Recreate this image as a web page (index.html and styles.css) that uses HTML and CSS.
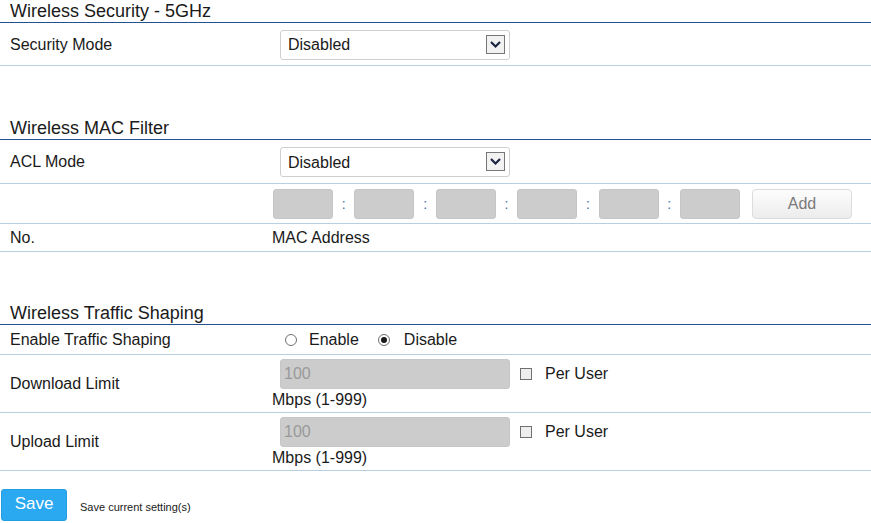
FILE: index.html
```html
<!DOCTYPE html>
<html lang="en">
<head>
    <meta charset="UTF-8">
    <meta name="viewport" content="width=device-width, initial-scale=1.0">
    <title>Wireless Settings</title>
    <link rel="stylesheet" href="styles.css">
</head>
<body>
    <div class="section">
        <div class="section-title">Wireless Security - 5GHz</div>
        <div class="row row-select">
            <div class="label">Security Mode</div>
            <div class="field">
                <div class="select-wrap">
                    <select class="select"><option>Disabled</option></select>
                    <svg class="select-arrow" width="19" height="19" viewBox="0 0 19 19"><rect x="0.5" y="0.5" width="18" height="18" fill="#f2f2f2" stroke="#777"/><polyline points="5,7 9.5,11.5 14,7" fill="none" stroke="#1b2440" stroke-width="2.2"/></svg>
                </div>
            </div>
        </div>
    </div>

    <div class="section section-mac">
        <div class="section-title">Wireless MAC Filter</div>
        <div class="row row-select row-acl">
            <div class="label">ACL Mode</div>
            <div class="field">
                <div class="select-wrap">
                    <select class="select"><option>Disabled</option></select>
                    <svg class="select-arrow" width="19" height="19" viewBox="0 0 19 19"><rect x="0.5" y="0.5" width="18" height="18" fill="#f2f2f2" stroke="#777"/><polyline points="5,7 9.5,11.5 14,7" fill="none" stroke="#1b2440" stroke-width="2.2"/></svg>
                </div>
            </div>
        </div>
        <div class="row row-mac">
            <div class="label"></div>
            <div class="field mac-field">
                <input class="mac" type="text"><span class="sep">:</span>
                <input class="mac" type="text"><span class="sep">:</span>
                <input class="mac" type="text"><span class="sep">:</span>
                <input class="mac" type="text"><span class="sep">:</span>
                <input class="mac" type="text"><span class="sep">:</span>
                <input class="mac" type="text">
                <button class="btn-add">Add</button>
            </div>
        </div>
        <div class="row row-head">
            <div class="label">No.</div>
            <div class="field">MAC Address</div>
        </div>
    </div>

    <div class="section section-last">
        <div class="section-title">Wireless Traffic Shaping</div>
        <div class="row row-radio">
            <div class="label">Enable Traffic Shaping</div>
            <div class="field radio-field">
                <span class="radio"></span><span class="radio-text">Enable</span>
                <span class="radio radio-second checked"></span><span class="radio-text radio-text-second">Disable</span>
            </div>
        </div>
        <div class="row row-limit">
            <div class="label">Download Limit</div>
            <div class="field">
                <div class="limit-line">
                    <input class="limit" type="text" value="100" disabled>
                    <span class="check"></span><span class="check-text">Per User</span>
                </div>
                <div class="unit">Mbps (1-999)</div>
            </div>
        </div>
        <div class="row row-limit">
            <div class="label">Upload Limit</div>
            <div class="field">
                <div class="limit-line">
                    <input class="limit" type="text" value="100" disabled>
                    <span class="check"></span><span class="check-text">Per User</span>
                </div>
                <div class="unit">Mbps (1-999)</div>
            </div>
        </div>
    </div>

    <div class="actions">
        <button class="btn-save">Save</button>
        <span class="save-note">Save current setting(s)</span>
    </div>
</body>
</html>
```

FILE: styles.css
```css
body {
    font-family: 'Liberation Sans', Arial, sans-serif;
    font-size: 16px;
    color: #1a1a1a;
    margin: 0;
    padding: 0;
    background: #fff;
}

.section {
    margin-bottom: 51px;
}

.section-mac {
    margin-bottom: 50px;
}

.section-last {
    margin-bottom: 0;
}

.section-title {
    height: 22px;
    line-height: 22px;
    font-size: 18px;
    padding-left: 10px;
    border-bottom: 1px solid #24508f;
}

.row {
    display: flex;
    align-items: center;
    border-bottom: 1px solid #b8cfe0;
    padding-top: 1px;
}

.label {
    width: 262px;
    padding-left: 10px;
    flex-shrink: 0;
}

.field {
    flex: 1;
}

.row-select { height: 41px; }
.row-acl { height: 42px; }
.row-mac { height: 38px; }
.row-head { height: 26px; }
.row-radio { height: 28px; }
.row-limit { height: 56px; }

.select-wrap {
    position: relative;
    width: 230px;
    margin-left: 8px;
}

.select {
    appearance: none;
    -webkit-appearance: none;
    display: block;
    width: 230px;
    height: 30px;
    padding: 0 0 0 7px;
    border: 1px solid #cfcfcf;
    border-radius: 3px;
    background: #fff;
    font-family: inherit;
    font-size: 16px;
    color: #1a1a1a;
}

.select-arrow {
    position: absolute;
    right: 5px;
    top: 5px;
}

.mac-field {
    display: flex;
    align-items: center;
    padding-left: 1px;
}

.mac {
    box-sizing: border-box;
    width: 60px;
    height: 30px;
    margin: 0;
    border: 1px solid #c6c6c6;
    border-radius: 3px;
    background: #cccccc;
}

.sep {
    width: 21.4px;
    text-align: center;
    font-size: 14px;
    color: #3a6ea8;
}

.btn-add {
    margin-left: 12px;
    width: 100px;
    height: 30px;
    border: 1px solid #dcdcdc;
    border-radius: 4px;
    background: linear-gradient(#fdfdfd, #ececec);
    font-family: inherit;
    font-size: 16px;
    color: #7a7a7a;
}

.radio-field {
    display: flex;
    align-items: center;
}

.radio {
    box-sizing: border-box;
    width: 12px;
    height: 12px;
    border: 1px solid #707070;
    border-radius: 50%;
    background: #fff;
    margin-left: 13px;
    position: relative;
}

.radio-second {
    margin-left: 19px;
}

.radio.checked::after {
    content: "";
    position: absolute;
    left: 2px;
    top: 2px;
    width: 6px;
    height: 6px;
    border-radius: 50%;
    background: #1a1a1a;
}

.radio-text {
    margin-left: 12px;
}

.radio-text-second {
    margin-left: 14px;
}

.limit-line {
    display: flex;
    align-items: center;
}

.limit {
    box-sizing: border-box;
    width: 230px;
    height: 30px;
    margin: 0 0 0 8px;
    padding: 0 0 0 3px;
    border: 1px solid #c6c6c6;
    border-radius: 3px;
    background: #cccccc;
    font-family: inherit;
    font-size: 16px;
    color: #999;
}

.check {
    box-sizing: border-box;
    width: 12px;
    height: 12px;
    border: 1px solid #707070;
    background: #eeeeee;
    margin-left: 10px;
}

.check-text {
    margin-left: 13px;
}

.unit {
    line-height: 18px;
    margin-top: 2px;
}

.actions {
    display: flex;
    align-items: center;
    margin-top: 18px;
    padding-left: 1px;
}

.btn-save {
    width: 66px;
    height: 32px;
    border: 1px solid #229ce2;
    border-radius: 3px;
    background: #2aa8f0;
    color: #fff;
    font-family: inherit;
    font-size: 17px;
    padding: 0 0 2px;
}

.save-note {
    font-size: 11px;
    margin-left: 13px;
    margin-top: 4px;
}
```
